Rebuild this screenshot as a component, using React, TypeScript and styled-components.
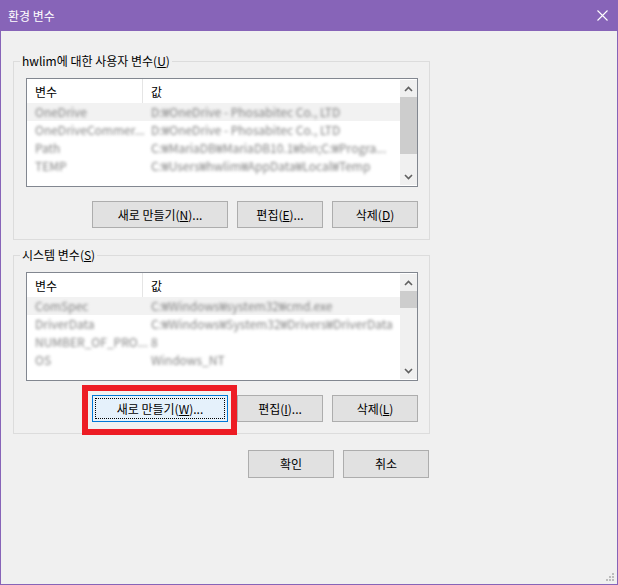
import styled, { createGlobalStyle } from "styled-components";

const GlobalStyle = createGlobalStyle`
  html, body {
    margin: 0;
    padding: 0;
    background: #f0f0f0;
  }
  body {
    font-family: "Noto Sans CJK KR", "Noto Sans", sans-serif;
    font-size: 12px;
    color: #000;
  }
`;

const Window = styled.div`
  position: relative;
  width: 618px;
  height: 585px;
  box-sizing: border-box;
  border: 1px solid #8764b8;
  border-top: none;
  background: #f0f0f0;
  display: flex;
  flex-direction: column;
`;

const TitleBar = styled.div`
  height: 31px;
  margin: 0 -1px;
  background: #8764b8;
  color: #fff;
  display: flex;
  align-items: center;
  justify-content: space-between;
  padding: 0 10px 0 8px;
  font-size: 12px;
  line-height: 16px;
`;

const Body = styled.div`
  padding: 22px 0 0 12px;
  display: flex;
  flex-direction: column;
  width: 417px;
`;

const Group = styled.fieldset<{ gapTop?: number }>`
  margin: ${({ gapTop }) => gapTop ?? 0}px 0 0 0;
  padding: 9px 11px 11px 12px;
  border: 1px solid #dcdcdc;
  min-width: 0;
  width: 417px;
  box-sizing: border-box;
`;

const Legend = styled.legend`
  margin-left: -6px;
  padding: 0 2px;
  font-size: 12px;
  line-height: 16px;
  height: 16px;
`;

const List = styled.div`
  height: 109px;
  box-sizing: border-box;
  border: 1px solid #828790;
  background: #fff;
  display: grid;
  grid-template-columns: 1fr 17px;
  overflow: hidden;
`;

const ListContent = styled.div`
  overflow: hidden;
  min-width: 0;
`;

const Header = styled.div`
  display: grid;
  grid-template-columns: 116px 1fr;
  height: 24px;
  align-items: stretch;
`;

const HeaderCell = styled.div<{ divider?: boolean }>`
  display: flex;
  align-items: center;
  padding-left: 8px;
  padding-top: 1px;
  border-right: ${({ divider }) => (divider ? "1px solid #e5e5e5" : "none")};
  line-height: 16px;
`;

const Row = styled.div<{ hot?: boolean }>`
  display: grid;
  grid-template-columns: 116px 1fr;
  height: 18px;
  align-items: center;
  background: ${({ hot }) => (hot ? "#f2f2f2" : "transparent")};
`;

const Cell = styled.div`
  padding-left: 8px;
  white-space: nowrap;
  color: #858585;
  filter: blur(1.4px);
  line-height: 16px;
`;

const ScrollBar = styled.div`
  background: #f0f0f0;
  display: flex;
  flex-direction: column;
  margin: 1px 0 1px 0;
`;

const ArrowBox = styled.div`
  height: 17px;
  display: flex;
  align-items: center;
  justify-content: center;
`;

const Track = styled.div`
  flex: 1;
  display: flex;
  flex-direction: column;
`;

const Thumb = styled.div<{ size: number }>`
  height: ${({ size }) => size}px;
  background: #cdcdcd;
`;

const ButtonRow = styled.div<{ top: number; right?: number }>`
  display: flex;
  justify-content: flex-end;
  gap: 9px;
  margin-top: ${({ top }) => top}px;
  margin-right: ${({ right }) => right ?? 0}px;
`;

const Button = styled.button<{ w: number; h?: number; focused?: boolean }>`
  position: relative;
  width: ${({ w }) => w}px;
  height: ${({ h }) => h ?? 27}px;
  box-sizing: border-box;
  border: 1px solid ${({ focused }) => (focused ? "#0078d7" : "#adadad")};
  background: ${({ focused }) => (focused ? "#e5f1fb" : "#e1e1e1")};
  font-family: "Noto Sans CJK KR", "Noto Sans", sans-serif;
  font-size: 12px;
  line-height: 16px;
  color: #000;
  padding: 0;
  &::after {
    content: "";
    display: ${({ focused }) => (focused ? "block" : "none")};
    position: absolute;
    inset: 2px;
    border: 1px dotted #000;
  }
`;

const Marked = styled.span`
  position: relative;
  display: inline-flex;
`;

const RedBox = styled.span`
  position: absolute;
  top: -10px;
  left: -10px;
  right: -9px;
  bottom: -13px;
  border: 6px solid #ed1c24;
  pointer-events: none;
`;

const Grip = styled.svg`
  position: absolute;
  right: 3px;
  bottom: 3px;
`;

type Item = [string, string];

const userVars: Item[] = [
  ["OneDrive", "D:₩OneDrive - Phosabitec Co., LTD"],
  ["OneDriveCommer...", "D:₩OneDrive - Phosabitec Co., LTD"],
  ["Path", "C:₩MariaDB₩MariaDB10.1₩bin;C:₩Progra..."],
  ["TEMP", "C:₩Users₩hwlim₩AppData₩Local₩Temp"],
];

const sysVars: Item[] = [
  ["ComSpec", "C:₩Windows₩system32₩cmd.exe"],
  ["DriverData", "C:₩Windows₩System32₩Drivers₩DriverData"],
  ["NUMBER_OF_PRO...", "8"],
  ["OS", "Windows_NT"],
];

const Chevron = ({ up }: { up?: boolean }) => (
  <svg width="9" height="6" viewBox="0 0 9 6">
    <path
      d={up ? "M1 5 L4.5 1.5 L8 5" : "M1 1 L4.5 4.5 L8 1"}
      fill="none"
      stroke="#606060"
      strokeWidth="1.6"
    />
  </svg>
);

function VarList({ items, thumbSize }: { items: Item[]; thumbSize: number }) {
  return (
    <List>
      <ListContent>
        <Header>
          <HeaderCell divider>변수</HeaderCell>
          <HeaderCell>값</HeaderCell>
        </Header>
        {items.map(([k, v], i) => (
          <Row key={k} hot={i === 0}>
            <Cell>{k}</Cell>
            <Cell>{v}</Cell>
          </Row>
        ))}
      </ListContent>
      <ScrollBar>
        <ArrowBox>
          <Chevron up />
        </ArrowBox>
        <Track>
          <Thumb size={thumbSize} />
        </Track>
        <ArrowBox>
          <Chevron />
        </ArrowBox>
      </ScrollBar>
    </List>
  );
}

export default function App() {
  return (
    <>
      <GlobalStyle />
      <Window>
        <TitleBar>
          <span>환경 변수</span>
          <svg width="11" height="11" viewBox="0 0 11 11">
            <path d="M0.5 0.5 L10.5 10.5 M10.5 0.5 L0.5 10.5" stroke="#fff" strokeWidth="1.1" />
          </svg>
        </TitleBar>
        <Body>
          <Group>
            <Legend>
              hwlim에 대한 사용자 변수(<u>U</u>)
            </Legend>
            <VarList items={userVars} thumbSize={57} />
            <ButtonRow top={14}>
              <Button w={136}>
                새로 만들기(<u>N</u>)...
              </Button>
              <Button w={86}>
                편집(<u>E</u>)...
              </Button>
              <Button w={86}>
                삭제(<u>D</u>)
              </Button>
            </ButtonRow>
          </Group>
          <Group gapTop={7}>
            <Legend>
              시스템 변수(<u>S</u>)
            </Legend>
            <VarList items={sysVars} thumbSize={17} />
            <ButtonRow top={14}>
              <Marked>
                <Button w={136} focused>
                  새로 만들기(<u>W</u>)...
                </Button>
                <RedBox />
              </Marked>
              <Button w={86}>
                편집(<u>I</u>)...
              </Button>
              <Button w={86}>
                삭제(<u>L</u>)
              </Button>
            </ButtonRow>
          </Group>
          <ButtonRow top={16} right={1}>
            <Button w={86} h={28}>
              확인
            </Button>
            <Button w={86} h={28}>
              취소
            </Button>
          </ButtonRow>
        </Body>
        <Grip width="8" height="8" viewBox="0 0 8 8">
          <rect x="6" y="0" width="2" height="2" fill="#bcbcbc" />
          <rect x="3" y="3" width="2" height="2" fill="#bcbcbc" />
          <rect x="6" y="3" width="2" height="2" fill="#bcbcbc" />
          <rect x="0" y="6" width="2" height="2" fill="#bcbcbc" />
          <rect x="3" y="6" width="2" height="2" fill="#bcbcbc" />
          <rect x="6" y="6" width="2" height="2" fill="#bcbcbc" />
        </Grip>
      </Window>
    </>
  );
}
